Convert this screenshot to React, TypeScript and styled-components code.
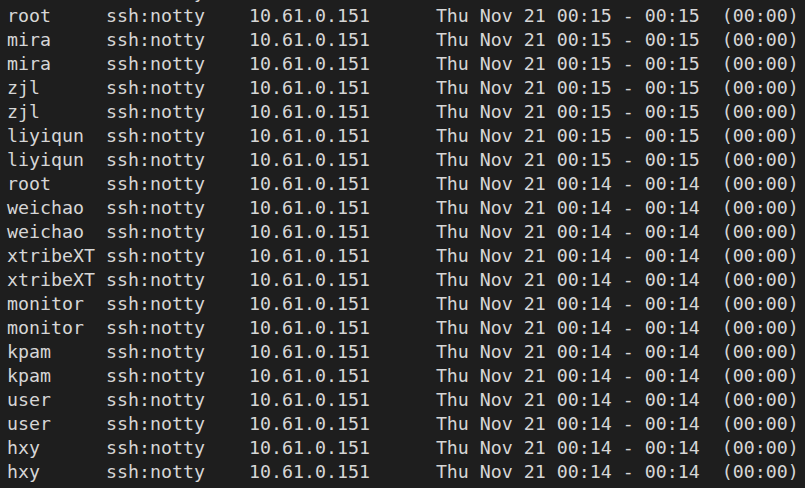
import React from "react";
import styled, { createGlobalStyle } from "styled-components";

const Global = createGlobalStyle`
  html, body { margin: 0; padding: 0; background: #1e1e1e; }
  body { overflow: hidden; }
`;

const Terminal = styled.div`
  width: 805px;
  height: 488px;
  overflow: hidden;
  box-sizing: border-box;
  padding: 4px 0 0 7px;
  background: #1e1e1e;
  color: #d6d6d6;
  font-family: "DejaVu Sans Mono", "Liberation Mono", monospace;
  font-size: 18.27px;
  line-height: 24px;
`;

const Line = styled.div<{ $lead?: boolean }>`
  white-space: pre;
  height: 24px;
  margin-top: ${(p) => (p.$lead ? "-24px" : "0")};
`;

type Row = { user: string; time: string };

const rows: Row[] = [
  { user: "root", time: "00:15" },
  { user: "root", time: "00:15" },
  { user: "mira", time: "00:15" },
  { user: "mira", time: "00:15" },
  { user: "zjl", time: "00:15" },
  { user: "zjl", time: "00:15" },
  { user: "liyiqun", time: "00:15" },
  { user: "liyiqun", time: "00:15" },
  { user: "root", time: "00:14" },
  { user: "weichao", time: "00:14" },
  { user: "weichao", time: "00:14" },
  { user: "xtribeXT", time: "00:14" },
  { user: "xtribeXT", time: "00:14" },
  { user: "monitor", time: "00:14" },
  { user: "monitor", time: "00:14" },
  { user: "kpam", time: "00:14" },
  { user: "kpam", time: "00:14" },
  { user: "user", time: "00:14" },
  { user: "user", time: "00:14" },
  { user: "hxy", time: "00:14" },
  { user: "hxy", time: "00:14" },
];

const fmt = (r: Row) =>
  `${r.user.padEnd(8)} ${"ssh:notty".padEnd(12)} ${"10.61.0.151".padEnd(16)} Thu Nov 21 ${r.time} - ${r.time}  (00:00)`;

export default function App() {
  return (
    <>
      <Global />
      <Terminal>
        {rows.map((r, i) => (
          <Line key={i} $lead={i === 0}>
            {fmt(r)}
          </Line>
        ))}
        <Line>btmp begins Thu Nov 21 00:14:02 2019</Line>
      </Terminal>
    </>
  );
}
